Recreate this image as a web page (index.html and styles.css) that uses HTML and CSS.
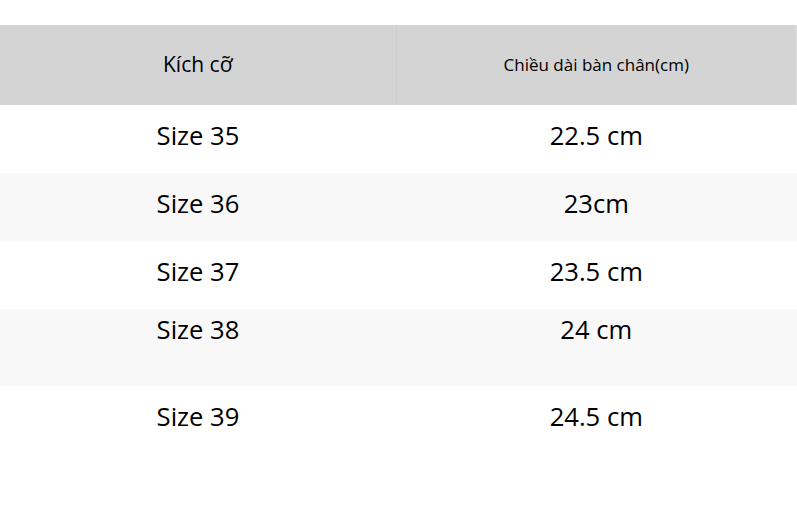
FILE: index.html
```html
<!DOCTYPE html>
<html lang="vi">
<head>
<meta charset="utf-8">
<link rel="stylesheet" href="styles.css">
</head>
<body>
<div class="page">
  <table class="size-table">
    <thead>
      <tr>
        <th class="h-left">Kích cỡ</th>
        <th class="h-right">Chiều dài bàn chân(cm)</th>
      </tr>
    </thead>
    <tbody>
      <tr class="row"><td>Size 35</td><td>22.5 cm</td></tr>
      <tr class="row alt"><td>Size 36</td><td>23cm</td></tr>
      <tr class="row"><td>Size 37</td><td>23.5 cm</td></tr>
      <tr class="row alt tall"><td>Size 38</td><td>24 cm</td></tr>
      <tr class="row"><td>Size 39</td><td>24.5 cm</td></tr>
    </tbody>
  </table>
</div>
</body>
</html>
```

FILE: styles.css
```css
html, body {
  margin: 0;
  padding: 0;
  background: #ffffff;
}
.page {
  padding-top: 25px;
  width: 797px;
}
.size-table {
  width: 797px;
  border-collapse: collapse;
  table-layout: fixed;
  font-family: "Open Sans", "Noto Sans", sans-serif;
  color: #000000;
}
.size-table th {
  background: #d4d4d4;
  height: 80px;
  box-sizing: border-box;
  padding: 0 0 2px 0;
  font-weight: 400;
  text-align: center;
  vertical-align: middle;
}
.h-left {
  width: 396px;
  font-size: 21px;
  border-right: 1px solid #cdcdcd;
}
.h-right {
  font-size: 17px;
  border-right: 1px solid #dedede;
}
.row td {
  height: 68px;
  padding: 0 0 7px 0;
  box-sizing: border-box;
  font-size: 25.6px;
  text-align: center;
  vertical-align: middle;
}
.alt td {
  background: #f8f8f8;
}
.tall td {
  height: 77px;
  vertical-align: top;
  padding: 3px 0 0 0;
}
```
